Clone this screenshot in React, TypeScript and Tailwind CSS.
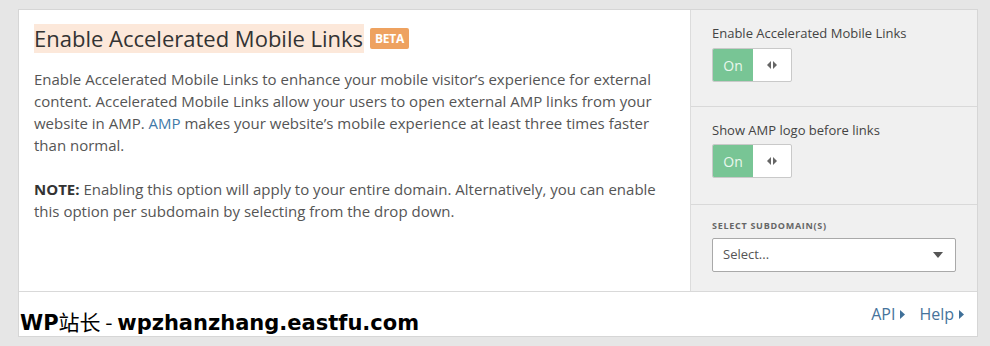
import React from 'react';

const font = { fontFamily: '"Open Sans", "Noto Sans", sans-serif' };

const Toggle: React.FC = () => (
  <div className="flex h-[34px] w-[80px] border border-[#c9c9c9] rounded-[2px] overflow-hidden bg-white">
    <div className="w-[40px] bg-[#78c595] text-[#eaf7ee] text-[14px] flex items-center justify-center">On</div>
    <div className="flex-1 flex items-center justify-center gap-[2px] text-[#666]">
      <svg width="10" height="8" viewBox="0 0 10 8">
        <path d="M4 0 L0 4 L4 8 Z" fill="#666" />
        <path d="M6 0 L10 4 L6 8 Z" fill="#666" />
      </svg>
    </div>
  </div>
);

const Caret: React.FC = () => (
  <svg width="5" height="9" viewBox="0 0 5 9" className="ml-[5px]">
    <path d="M0 0 L5 4.5 L0 9 Z" fill="#3f7099" />
  </svg>
);

export default function App() {
  return (
    <div className="relative min-h-[346px] bg-[#e6e6e6] pt-[9px]" style={font}>
      <div className="ml-[18px] w-[960px] border border-[#d6d6d6] bg-white">
        <div className="flex h-[281px]">
          <div className="flex-1 pl-[15px] pr-[16px] pt-[14px]">
            <div className="flex items-center">
              <h1 className="bg-[#fce8da] text-[22px] leading-[29px] text-[#333] font-normal pr-[1px]">
                Enable Accelerated Mobile Links
              </h1>
              <span className="ml-[6px] h-[21px] px-[5px] rounded-[2px] bg-[#eea260] text-white text-[12px] font-bold leading-[21px] tracking-tight">
                BETA
              </span>
            </div>
            <p className="mt-[15px] text-[15px] leading-[22px] text-[#555]">
              Enable Accelerated Mobile Links to enhance your mobile visitor’s experience for external content.
              Accelerated Mobile Links allow your users to open external AMP links from your website in AMP.{' '}
              <span className="text-[#3f7aa8]">AMP</span> makes your website’s mobile experience at least three
              times faster than normal.
            </p>
            <p className="mt-[22px] text-[15px] leading-[22px] text-[#555]">
              <span className="font-bold text-[#333]">NOTE:</span> Enabling this option will apply to your entire
              domain. Alternatively, you can enable this option per subdomain by selecting from the drop down.
            </p>
          </div>
          <div className="w-[287px] bg-[#f0f0f0] border-l border-[#dcdcdc] flex flex-col">
            <div className="h-[97px] border-b border-[#d9d9d9] px-[21px] pt-[14px]">
              <div className="text-[13px] leading-[18px] text-[#444] mb-[6px]">Enable Accelerated Mobile Links</div>
              <Toggle />
            </div>
            <div className="h-[98px] border-b border-[#d9d9d9] px-[21px] pt-[14px]">
              <div className="text-[13px] leading-[18px] text-[#444] mb-[5px]">Show AMP logo before links</div>
              <Toggle />
            </div>
            <div className="flex-1 px-[21px] pt-[14px]">
              <div className="text-[9px] leading-[14px] font-bold tracking-[0.08em] text-[#666] uppercase mb-[5px]">
                Select Subdomain(s)
              </div>
              <div className="flex items-center justify-between h-[34px] w-[244px] border border-[#a9a9a9] rounded-[2px] bg-white pl-[10px] pr-[12px]">
                <span className="text-[13px] text-[#555]">Select...</span>
                <svg width="10" height="6" viewBox="0 0 10 6">
                  <path d="M0 0 L10 0 L5 6 Z" fill="#555" />
                </svg>
              </div>
            </div>
          </div>
        </div>
        <div className="h-[45px] border-t border-[#d9d9d9] flex items-center justify-end pr-[13px] gap-[14px] text-[16px] text-[#46739b]">
          <span className="flex items-center">API<Caret /></span>
          <span className="flex items-center">Help<Caret /></span>
        </div>
      </div>
      <div
        className="absolute left-[20px] top-[308px] text-[21px] leading-[26px] text-black whitespace-nowrap"
        style={{ fontFamily: '"DejaVu Sans", "Noto Sans CJK SC", sans-serif' }}
      >
        <span className="font-bold">WP</span>
        <span className="font-normal" style={{ fontFamily: '"Noto Sans CJK SC", sans-serif' }}>站长 - </span>
        <span className="font-bold">wpzhanzhang.eastfu.com</span>
      </div>
    </div>
  );
}
